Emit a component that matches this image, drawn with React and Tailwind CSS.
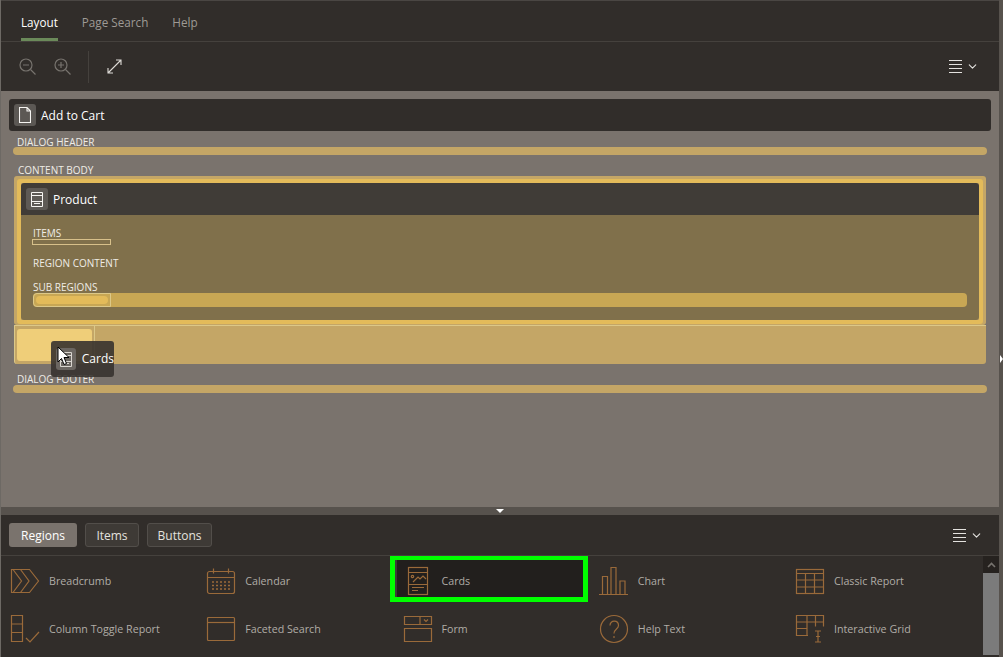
import { FiChevronDown } from 'react-icons/fi'

const S = ({ children, w = 36, h = 36 }) => (
  <svg width={w} height={h} viewBox={`0 0 ${w} ${h}`} fill="none" stroke="#9a6a3a" strokeWidth="1.2" className="shrink-0">
    {children}
  </svg>
)

const icons = {
  Breadcrumb: (
    <S w={30} h={26}>
      <path d="M1.500 1.500h18l9 11.500-9 11.500h-18z M3 1.500l8.500 11.500-8.500 11.500 M10.500 1.500l8.500 11.500-8.500 11.500" />
    </S>
  ),
  Calendar: (
    <S w={30} h={28}>
      <rect x="1.500" y="4.500" width="27" height="22" rx="2" />
      <path d="M1.500 10.500h27M7.500 1.500v5M22.500 1.500v5" />
      <path d="M6 15h18M6 18.500h18M6 22h18" strokeDasharray="2 2" strokeWidth="1.500" />
    </S>
  ),
  Cards: (
    <S w={22} h={30}>
      <rect x="1.500" y="1.500" width="19" height="27" />
      <path d="M1.500 6.500h19M1.500 18.500h19M5 21.500h12M5 24.500h6M6 16l5-5 2 2 3-3 3 3" />
      <circle cx="5.500" cy="10.500" r="1.200" />
    </S>
  ),
  Chart: (
    <S w={30} h={30}>
      <path d="M0 28.500h29M3.500 28V10.500h5V28M12 28V1.500h5V28M21 28V15h5v13" />
    </S>
  ),
  'Classic Report': (
    <S w={30} h={27}>
      <rect x="1.500" y="1.500" width="27" height="24" />
      <path d="M1.500 5.500h27M1.500 12h27M1.500 19h27M10.500 5.500v20M19.500 5.500v20" />
    </S>
  ),
  'Column Toggle Report': (
    <S w={30} h={30}>
      <path d="M1.500 1.500h11v26h-11zM1.500 10h11M1.500 18.500h11M16 24l4 4 9-10" />
    </S>
  ),
  'Faceted Search': (
    <S w={30} h={26}>
      <rect x="1.500" y="1.500" width="27" height="23" rx="1" />
      <path d="M1.500 6.500h27" />
    </S>
  ),
  Form: (
    <S w={30} h={28}>
      <path d="M1.500 1.500h27v8h-27zM17 1.500v8M21 4.500l2 2 2-2M1.500 13.500h27v13h-27z" />
    </S>
  ),
  'Help Text': (
    <S w={30} h={30}>
      <circle cx="15" cy="15" r="13.500" />
      <path d="M11 11.500c0-6 8.500-5.500 8.500 0 0 3.500-4.500 3.500-4.500 8M15 22v2" />
    </S>
  ),
  'Interactive Grid': (
    <S w={30} h={30}>
      <path d="M13 21.500H1.500v-20h27v11M1.500 8h27M1.500 14.500h11M12 1.500v20M20.500 1.500v11" />
      <path d="M20 17h6M20 28h6M23 17v11M21 22.500h4" />
    </S>
  ),
}

const rows = [
  ['Breadcrumb', 'Calendar', 'Cards', 'Chart', 'Classic Report'],
  ['Column Toggle Report', 'Faceted Search', 'Form', 'Help Text', 'Interactive Grid'],
]

const HamburgerMenu = () => (
  <div className="flex items-center gap-1 text-[#e4e2df]">
    <div className="flex w-[13px] flex-col gap-[3px]">
      <div className="h-px bg-[#e4e2df]" />
      <div className="h-px bg-[#e4e2df]" />
      <div className="h-px bg-[#e4e2df]" />
      <div className="h-px bg-[#e4e2df]" />
    </div>
    <FiChevronDown className="h-[13px] w-[13px]" />
  </div>
)

const Zoom = ({ plus }) => (
  <svg width="17" height="17" viewBox="0 0 17 17" fill="none" stroke="#77736e" strokeWidth="1.200">
    <circle cx="7" cy="7" r="6" />
    <path d="M11.500 11.500l5 5M4 7h6" />
    {plus && <path d="M7 4v6" />}
  </svg>
)

const Label = ({ children, className = '' }) => (
  <div className={`text-[10px] leading-3 text-[#efece6] ${className}`}>{children}</div>
)

const PageIcon = () => (
  <div className="flex h-[22px] w-[22px] items-center justify-center rounded-[3px] bg-[#5c5854]">
    <svg width="12" height="16" viewBox="0 0 12 16" fill="none" stroke="#f6f4f1" strokeWidth="1.100">
      <path d="M.5.500h7.500l3.500 3.500v11.500h-11zM8 .500v3.500h3.500" />
    </svg>
  </div>
)

const RegionIcon = ({ className = 'bg-[#5e5a55]', stroke = '#f6f4f1' }) => (
  <div className={`flex h-[22px] w-[22px] items-center justify-center rounded-[3px] ${className}`}>
    <svg width="12" height="15" viewBox="0 0 12 15" fill="none" stroke={stroke} strokeWidth="1">
      <path d="M.5.500h11v14h-11zM.5 3.500h11M.5 9.500h11M3 11.500h6" />
    </svg>
  </div>
)

export default function App() {
  return (
    <div className="relative flex h-[657px] w-[1003px] flex-col overflow-hidden border-l border-[#6d6964] bg-[#57524d] font-['Open_Sans','Noto_Sans',sans-serif]">
      <div className="mr-1 flex flex-1 flex-col border-t border-[#4a4643] bg-[#312d2a]">
        {/* Tabs */}
        <div className="flex h-[41px] shrink-0 gap-6 border-b border-[#45413d] pl-5 text-[11.7px]">
          <div className="relative flex items-center pt-1 text-white">
            Layout
            <div className="absolute inset-x-0 bottom-0 h-[3px] bg-[#6b8a5a]" />
          </div>
          <div className="flex items-center pt-1 text-[#9e9a95]">Page Search</div>
          <div className="flex items-center pt-1 text-[#9e9a95]">Help</div>
        </div>

        {/* Toolbar */}
        <div className="flex h-[49px] shrink-0 items-center pl-[18px] pr-5">
          <Zoom />
          <div className="ml-[18px]"><Zoom plus /></div>
          <div className="ml-[17px] h-8 w-px bg-[#45413d]" />
          <svg className="ml-[18px]" width="15" height="15" viewBox="0 0 15 15" fill="none" stroke="#dedbd7" strokeWidth="1.100">
            <path d="M1 14L14 1M9 1h5v5M1 9v5h5" />
          </svg>
          <div className="ml-auto"><HamburgerMenu /></div>
        </div>

        {/* Layout canvas */}
        <div className="relative flex h-[416px] shrink-0 flex-col bg-[#7a736d] px-2 pt-2">
          <div className="flex h-8 items-center gap-[5px] rounded-[3px] bg-[#312d2a] pl-[5px] text-xs text-white">
            <PageIcon />
            <span className="pt-px">Add to Cart</span>
          </div>
          <Label className="mt-[5px] pl-2">DIALOG HEADER</Label>
          <div className="mx-1 -mt-px h-2 rounded-full bg-[#c4a666]" />
          <Label className="mt-[9px] pl-[9px]">CONTENT BODY</Label>

          <div className="mx-[5px] flex flex-col rounded-[3px] bg-[#c4a666] px-[3px] pb-px pt-[3px]">
            <div className="rounded-[3px] border-4 border-[#e3bb5a]">
              <div className="overflow-hidden rounded-[3px]">
                <div className="flex h-8 items-center gap-[5px] bg-[#403c37] pl-[5px] text-xs text-white">
                  <RegionIcon />
                  <span className="pt-px">Product</span>
                </div>
                <div className="h-[105px] bg-[#80704b] px-3 pt-3">
                  <Label>ITEMS</Label>
                  <div className="-ml-px h-[6px] w-[79px] border border-[#d7c08a]" />
                  <Label className="mt-3">REGION CONTENT</Label>
                  <Label className="mt-3">SUB REGIONS</Label>
                  <div className="h-[14px] rounded-[4px] bg-[#c8a754]">
                    <div className="flex h-full w-[78px] items-center rounded-l-[4px] border border-[#dcc888] px-[2px]">
                      <div className="h-2 w-full rounded-full bg-[#e3bb5a]" />
                    </div>
                  </div>
                </div>
              </div>
            </div>
          </div>

          <div className="mx-[5px] flex h-[39px] rounded-b-[3px] border-l border-t border-[#dcc888] bg-[#c4a666]">
            <div className="w-[80px] border-r border-[#dcc888] py-[3px] pl-[2px] pr-[2px]">
              <div className="h-full rounded-[3px] bg-[#efce79]" />
            </div>
          </div>

          <Label className="mt-[9px] pl-2">DIALOG FOOTER</Label>
          <div className="mx-1 h-2 rounded-full bg-[#c4a666]" />

          {/* Drag ghost */}
          <div className="absolute left-[50px] top-[250px] flex h-9 w-[63px] items-center gap-[6px] rounded-[3px] bg-[#37332f]/90 pl-[5px] text-xs text-white">
            <RegionIcon className="bg-[#6b6661]" stroke="#d9d5cf" />
            <span className="-mt-px">Cards</span>
          </div>
          <svg className="absolute left-[56px] top-[255px]" width="14" height="20" viewBox="0 0 14 20">
            <path d="M1 1v15l3.500-3.500 2.500 6 2.500-1-2.500-6h5z" fill="#fff" stroke="#000" strokeWidth="1" />
          </svg>
        </div>

        {/* Splitter */}
        <div className="flex h-2 shrink-0 items-center justify-center bg-[#57524d]">
          <div className="h-0 w-0 border-x-[4px] border-t-[4px] border-x-transparent border-t-white" />
        </div>

        {/* Gallery */}
        <div className="flex h-[41px] shrink-0 items-center gap-2 border-b border-[#45413d] pl-2 pr-4 text-xs">
          <div className="flex h-6 w-[68px] items-center justify-center rounded-[3px] bg-[#7a736d] pt-px text-white">Regions</div>
          <div className="flex h-6 w-[54px] items-center justify-center rounded-[3px] border border-[#524e4a] bg-[#3e3a36] pt-px text-[#e4e2df]">Items</div>
          <div className="flex h-6 w-[65px] items-center justify-center rounded-[3px] border border-[#524e4a] bg-[#3e3a36] pt-px text-[#e4e2df]">Buttons</div>
          <div className="ml-auto"><HamburgerMenu /></div>
        </div>

        <div className="flex flex-1 overflow-hidden">
          <div className="flex-1 pt-px">
            {rows.map((row, i) => (
              <div key={i} className="grid h-12 grid-cols-[196.250px_196.250px_196.250px_196.250px_1fr] items-center">
                {row.map(name => {
                  const selected = name === 'Cards'
                  return (
                    <div key={name} className="relative flex h-full items-center text-[10.7px] text-[#b0aca6]">
                      {selected && (
                        <div className="absolute -left-1 -top-[2px] h-[47px] w-[198px] border-[5px] border-[#00ff00] bg-[#221f1d] shadow-[inset_2px_0_0_#3f3b37]" />
                      )}
                      <div className="relative flex w-12 shrink-0 justify-center">{icons[name]}</div>
                      <span className="relative">{name}</span>
                    </div>
                  )
                })}
              </div>
            ))}
          </div>
          <div className="flex w-4 shrink-0 flex-col pb-[2px]">
            <div className="flex h-[17px] items-center justify-center bg-[#26221f]">
              <svg width="9" height="6" viewBox="0 0 9 6" fill="none" stroke="#77736e" strokeWidth="1.600"><path d="M1 5l3.500-3.500L8 5" /></svg>
            </div>
            <div className="flex-1 bg-[#7b7b7b]" />
          </div>
        </div>
      </div>

      {/* Side splitter handle */}
      <div className="absolute right-0 top-[355px] h-0 w-0 border-y-[4px] border-l-[3px] border-y-transparent border-l-white" />
    </div>
  )
}
